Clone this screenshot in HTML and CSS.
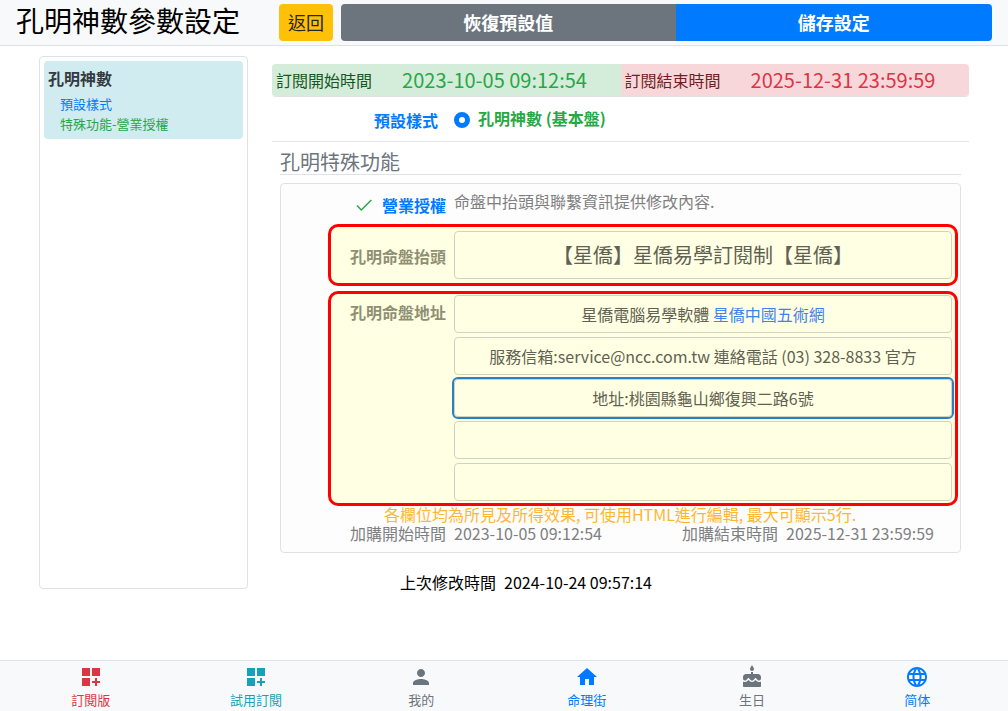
FILE: index.html
```
<!DOCTYPE html>
<html lang="zh-TW">
<head>
<meta charset="utf-8">
<meta name="viewport" content="width=device-width, initial-scale=1">
<title>孔明神數參數設定</title>
<link rel="stylesheet" href="styles.css">
</head>
<body>
<header class="topbar">
  <h1 class="title">孔明神數參數設定</h1>
  <button type="button" class="btn btn-back">返回</button>
  <div class="btn-group">
    <button type="button" class="btn btn-reset">恢復預設值</button>
    <button type="submit" form="settings" class="btn btn-save">儲存設定</button>
  </div>
</header>

<main class="layout">
  <nav class="sidebar">
    <div class="side-card">
      <div class="side-title">孔明神數</div>
      <a class="side-link blue" href="#style">預設樣式</a>
      <a class="side-link green" href="#special">特殊功能-營業授權</a>
    </div>
  </nav>

  <form class="content" id="settings">
    <div class="period">
      <div class="period-item start"><span>訂閱開始時間</span><span class="period-date">2023-10-05 09:12:54</span></div>
      <div class="period-item end"><span>訂閱結束時間</span><span class="period-date">2025-12-31 23:59:59</span></div>
    </div>

    <div class="style-row" id="style">
      <span class="style-label">預設樣式</span>
      <input class="radio" type="radio" name="style" id="basic" checked>
      <label class="radio-label" for="basic">孔明神數 (基本盤)</label>
    </div>

    <section class="special" id="special">
      <h2 class="section-title">孔明特殊功能</h2>
      <div class="panel">
        <div class="license">
          <div class="license-name">
            <svg class="check" viewBox="0 0 16 16" aria-hidden="true"><path d="M1 8.5 5.3 13 15.3 3" fill="none" stroke="currentColor" stroke-width="1.5"/></svg>
            <span>營業授權</span>
          </div>
          <p class="license-text">命盤中抬頭與聯繫資訊提供修改內容.</p>
        </div>

        <div class="marked marked-title">
          <label class="field-label" for="head">孔明命盤抬頭</label>
          <input class="field field-large" id="head" type="text" value="【星僑】星僑易學訂閱制【星僑】">
        </div>

        <div class="marked marked-address">
          <span class="field-label" id="addr">孔明命盤地址</span>
          <div class="fields">
            <div class="field" role="textbox" aria-labelledby="addr" contenteditable="true" spellcheck="false">星僑電腦易學軟體 <a class="field-link" href="#site">星僑中國五術網</a></div>
            <input class="field" type="text" aria-labelledby="addr" value="服務信箱:service@ncc.com.tw 連絡電話 (03) 328-8833 官方">
            <input class="field active" type="text" aria-labelledby="addr" value="地址:桃園縣龜山鄉復興二路6號">
            <input class="field" type="text" aria-labelledby="addr">
            <input class="field" type="text" aria-labelledby="addr">
          </div>
        </div>

        <p class="hint">各欄位均為所見及所得效果, 可使用HTML進行編輯, 最大可顯示5行.</p>
        <div class="addon">
          <span class="addon-label">加購開始時間</span><span>2023-10-05 09:12:54</span>
          <span class="addon-label">加購結束時間</span><span>2025-12-31 23:59:59</span>
        </div>
      </div>
    </section>

    <div class="modified"><span class="modified-label">上次修改時間</span><span>2024-10-24 09:57:14</span></div>
  </form>
</main>

<nav class="tabs">
  <a class="tab red" href="#sub"><svg class="icon" viewBox="0 0 24 24"><path d="M3 3h8v8H3zM13 3h8v8h-8zM3 13h8v8H3zM18 13h-2v3h-3v2h3v3h2v-3h3v-2h-3z"/></svg><span>訂閱版</span></a>
  <a class="tab teal" href="#trial"><svg class="icon" viewBox="0 0 24 24"><path d="M3 3h8v8H3zM13 3h8v8h-8zM3 13h8v8H3zM18 13h-2v3h-3v2h3v3h2v-3h3v-2h-3z"/></svg><span>試用訂閱</span></a>
  <a class="tab gray" href="#me"><svg class="icon" viewBox="0 0 24 24"><path d="M12 12c2.21 0 4-1.79 4-4s-1.79-4-4-4-4 1.79-4 4 1.79 4 4 4zm0 2c-2.67 0-8 1.34-8 4v2h16v-2c0-2.66-5.33-4-8-4z"/></svg><span>我的</span></a>
  <a class="tab blue" href="#street"><svg class="icon" viewBox="0 0 24 24"><path d="M10 20v-6h4v6h5v-8h3L12 3 2 12h3v8z"/></svg><span>命理街</span></a>
  <a class="tab gray" href="#birthday"><svg class="icon" viewBox="0 0 24 24"><path d="M12 6c1.11 0 2-.9 2-2 0-.38-.1-.73-.29-1.03L12 0l-1.71 2.97c-.19.3-.29.65-.29 1.03 0 1.1.9 2 2 2zm4.6 9.99-1.07-1.07-1.08 1.07c-1.3 1.3-3.58 1.31-4.89 0l-1.07-1.07-1.09 1.07C6.75 16.64 5.88 17 4.96 17c-.73 0-1.4-.23-1.96-.61V21c0 .55.45 1 1 1h16c.55 0 1-.45 1-1v-4.61c-.56.38-1.23.61-1.96.61-.92 0-1.79-.36-2.44-1.01zM18 9h-5V7h-2v2H6c-1.66 0-3 1.34-3 3v1.54c0 1.08.88 1.96 1.96 1.96.52 0 1.02-.2 1.38-.57l2.14-2.13 2.13 2.13c.74.74 2.03.74 2.77 0l2.14-2.13 2.13 2.13c.37.37.86.57 1.38.57 1.08 0 1.96-.88 1.96-1.96V12C21 10.34 19.66 9 18 9z"/></svg><span>生日</span></a>
  <a class="tab blue" href="#lang"><svg class="icon" viewBox="0 0 24 24"><path d="M11.99 2C6.47 2 2 6.48 2 12s4.47 10 9.99 10C17.52 22 22 17.52 22 12S17.52 2 11.99 2zm6.93 6h-2.95c-.32-1.25-.78-2.45-1.38-3.56 1.84.63 3.37 1.91 4.33 3.56zM12 4.04c.83 1.2 1.48 2.53 1.91 3.96h-3.82c.43-1.43 1.08-2.76 1.91-3.96zM4.26 14C4.1 13.36 4 12.69 4 12s.1-1.36.26-2h3.38c-.08.66-.14 1.32-.14 2 0 .68.06 1.34.14 2H4.26zm.82 2h2.95c.32 1.25.78 2.45 1.38 3.56-1.84-.63-3.37-1.9-4.33-3.56zm2.95-8H5.08c.96-1.66 2.49-2.93 4.33-3.56C8.81 5.55 8.35 6.75 8.03 8zM12 19.96c-.83-1.2-1.48-2.53-1.91-3.96h3.82c-.43 1.43-1.08 2.76-1.91 3.96zM14.34 14H9.66c-.09-.66-.16-1.32-.16-2 0-.68.07-1.35.16-2h4.68c.09.65.16 1.32.16 2 0 .68-.07 1.34-.16 2zm.25 5.56c.6-1.11 1.06-2.31 1.38-3.56h2.95c-.96 1.65-2.49 2.93-4.33 3.56zM16.36 14c.08-.66.14-1.32.14-2 0-.68-.06-1.34-.14-2h3.38c.16.64.26 1.31.26 2s-.1 1.36-.26 2h-3.38z"/></svg><span>简体</span></a>
</nav>
</body>
</html>
```

FILE: styles.css
```
*, *::before, *::after { box-sizing: border-box; }

body {
  margin: 0;
  min-height: 100vh;
  display: flex;
  flex-direction: column;
  font: 400 16px/24px "Noto Sans CJK TC", "Noto Sans", sans-serif;
  color: #000;
  background: #fff;
}

h1, h2, p { margin: 0; font-weight: inherit; }
a { text-decoration: none; }
button, input { font: inherit; color: inherit; }

.blue { color: #007bff; }
.green { color: #28a745; }
.red { color: #dc3545; }
.teal { color: #17a2b8; }
.gray { color: #6c757d; }

.topbar {
  display: flex;
  align-items: center;
  padding: 4px 16px;
  background: #f8f9fa;
  border-bottom: 1px solid #dee2e6;
}
.title { flex: none; margin-right: 39px; padding-bottom: 4px; font-size: 28px; line-height: 33px; }
.btn { border: 0; padding: 4px 9px; font-size: 18px; line-height: 29px; cursor: pointer; }
.btn-back { flex: none; margin-right: 8px; color: #212529; background: #ffc107; border-radius: 4px; }
.btn-group { flex: 1; display: flex; }
.btn-group .btn { flex: 1 1 auto; color: #fff; font-weight: 700; }
.btn-reset { background: #6c757d; border-radius: 4px 0 0 4px; }
.btn-save { background: #007bff; border-radius: 0 4px 4px 0; }

.layout {
  flex: 1;
  display: grid;
  grid-template-columns: 3fr 10fr;
  column-gap: 24px;
  padding: 10px 39px 64px;
}

.sidebar { padding: 4px; border: 1px solid #dee2e6; border-radius: 4px; margin-bottom: 7px; }
.side-card { padding: 5px 4px; background: #d1ecf1; border-radius: 4px; }
.side-title { margin-bottom: 4px; font-weight: 700; color: #343a40; }
.side-link { display: block; padding-left: 12px; font-size: 13px; line-height: 20px; }

.content { min-width: 0; padding-top: 8px; }

.period { display: flex; border-bottom: 1px solid #dee2e6; border-radius: 4px; overflow: hidden; }
.period-item { flex: 1; display: flex; align-items: center; padding: 4px; }
.period-date { margin-left: 30px; font-size: 20px; }
.start { color: #155724; background: #d4edda; }
.start .period-date { color: #28a745; }
.end { color: #721c24; background: #f8d7da; }
.end .period-date { color: #dc3545; }

.style-row {
  display: grid;
  grid-template-columns: 166px 16px 1fr;
  column-gap: 16px;
  align-items: center;
  padding: 9px 0 8px;
  border-bottom: 1px solid #e5e5e5;
}
.style-label { text-align: right; font-weight: 700; color: #007bff; }
.radio { appearance: none; width: 16px; height: 16px; margin: 0; border: 5px solid #007bff; border-radius: 50%; background: #fff; }
.radio-label { margin-left: -8px; padding-bottom: 3px; font-weight: 700; color: #28a745; }

.special { padding: 8px 8px 0; }
.section-title { font-size: 20px; line-height: 24px; color: #6c757d; border-bottom: 1px solid #dee2e6; }

.panel { margin-top: 8px; padding: 5px 2px 9px 47px; border: 1px solid #dee2e6; border-radius: 4px; background: #fdfdfe; color: #808080; }
.license { display: grid; grid-template-columns: 118px 1fr; column-gap: 8px; padding-bottom: 7px; }
.license-name { display: flex; justify-content: flex-end; align-items: center; gap: 10px; padding-top: 4px; font-weight: 700; color: #007bff; }
.check { width: 16px; height: 16px; color: #28a745; }

.marked {
  display: grid;
  grid-template-columns: 115px 1fr;
  column-gap: 8px;
  border: 3px solid #f00;
  border-radius: 10px;
  background: #ffffe3;
  color: #5f6152;
}
.marked-title { padding: 4px 3px 4px 0; }
.marked-address { margin-top: 5px; padding: 1px 3px 2px 0; }
.field-label { padding-top: 5px; text-align: right; font-weight: 700; color: #8f8f72; }
.marked-title .field-label { padding-top: 13px; }
.fields { display: grid; row-gap: 4px; min-width: 0; }
.field {
  width: 100%;
  min-width: 0;
  height: 38px;
  padding: 6px 12px;
  border: 1px solid #cfd3bf;
  border-radius: 4px;
  background: transparent;
  text-align: center;
}
.field-large { height: 48px; padding-bottom: 8px; font-size: 20px; }
.field-link { color: #3f82ef; }
.active { outline: 2px solid #2b80c4; }

.hint { padding-right: 46px; text-align: center; line-height: 17px; color: #ffb733; }
.addon { display: grid; grid-template-columns: 118px 1fr 96px 172px; column-gap: 8px; line-height: 20px; }
.addon-label { text-align: right; }

.modified { display: grid; grid-template-columns: 224px 1fr; column-gap: 8px; padding-top: 17px; }
.modified-label { text-align: right; }

.tabs { display: flex; padding: 0 8px; background: #f8f9fa; border-top: 1px solid #dee2e6; }
.tab { flex: 1; display: flex; flex-direction: column; align-items: center; padding-top: 4px; font-size: 13px; line-height: 22px; }
.icon { width: 24px; height: 24px; fill: currentColor; }
```
